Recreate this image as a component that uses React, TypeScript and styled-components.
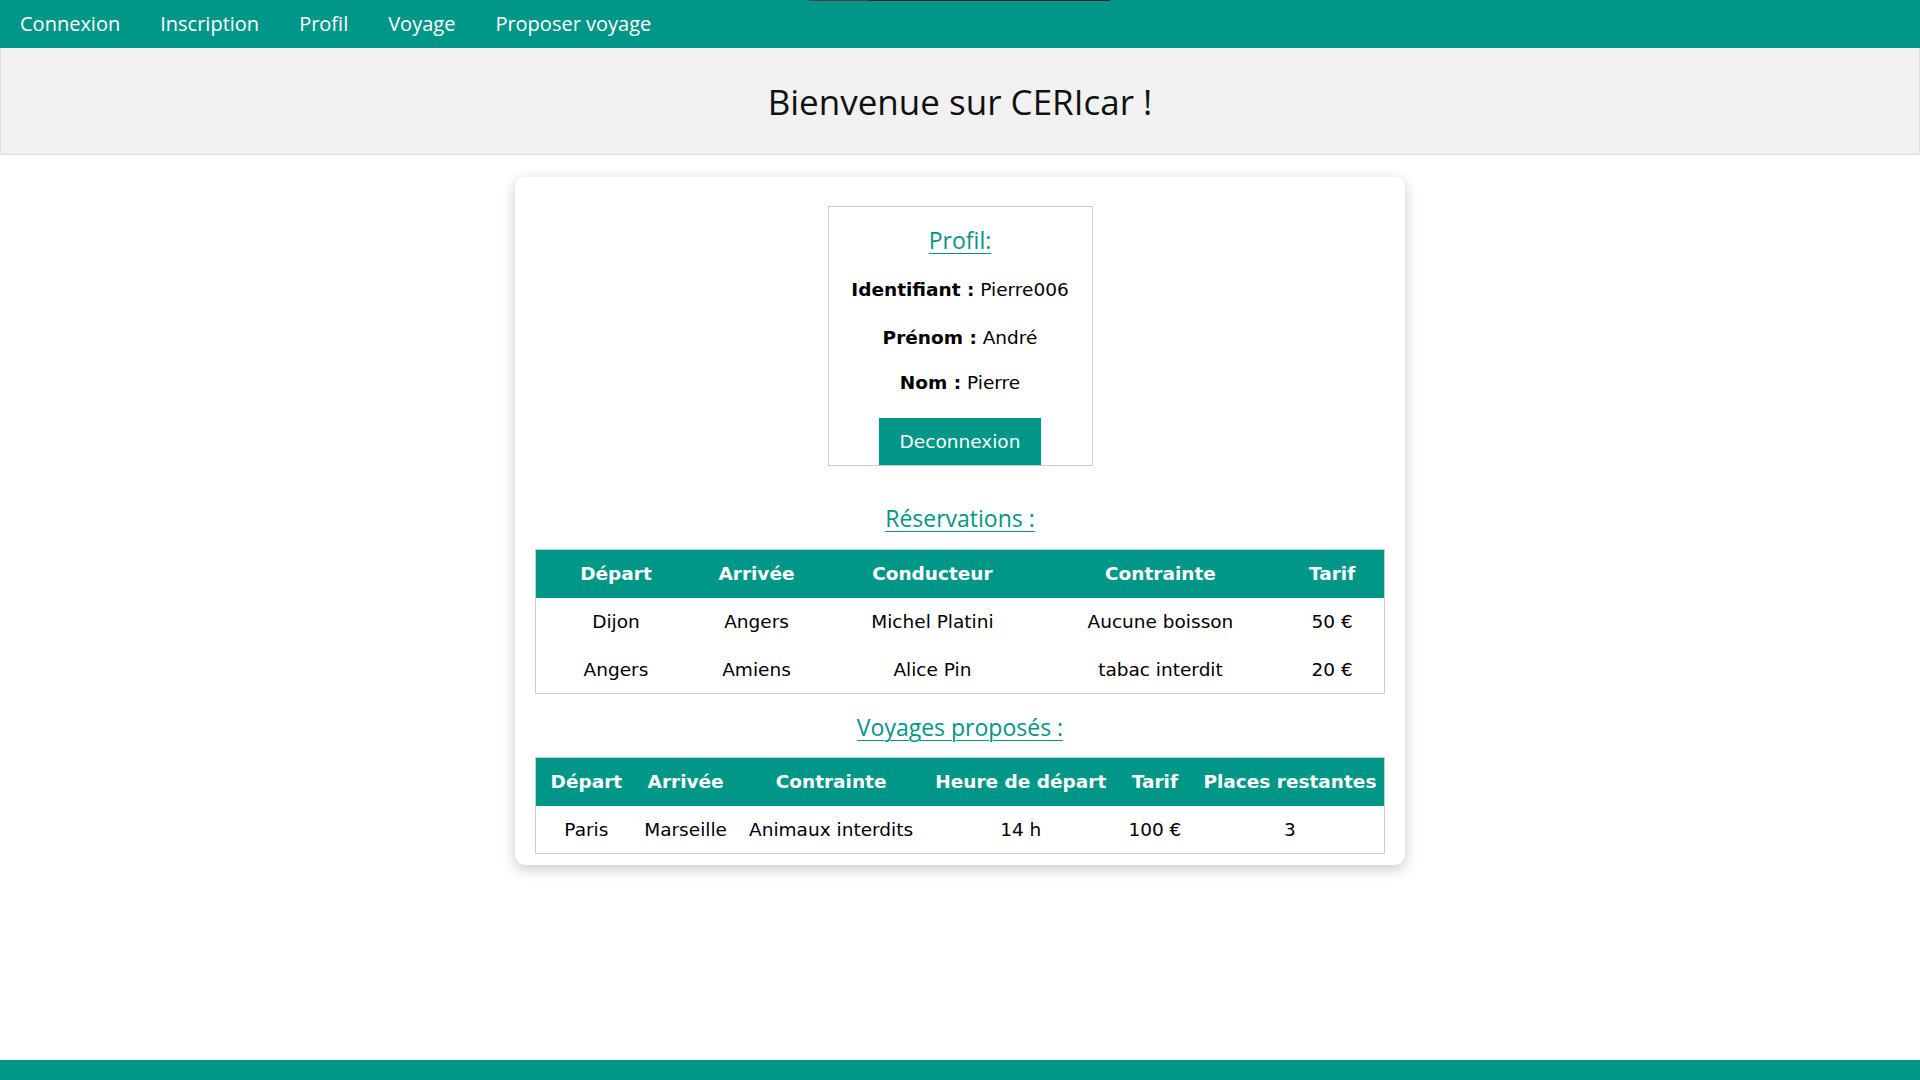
import React from 'react';
import styled, { createGlobalStyle } from 'styled-components';

const TEAL = '#009688';

const GlobalStyle = createGlobalStyle`
  html, body {
    margin: 0;
    padding: 0;
    background: #fff;
  }
  body {
    font-family: "DejaVu Sans", Verdana, sans-serif;
    color: #000;
  }
  * {
    box-sizing: border-box;
  }
`;

const Page = styled.div`
  min-height: 100vh;
  display: flex;
  flex-direction: column;
`;

const NavBar = styled.nav`
  position: relative;
  height: 48px;
  background: ${TEAL};
  display: flex;
  align-items: center;
`;

// petite barre sombre en haut (chargement ?)
const TopStrip = styled.div`
  position: absolute;
  top: 0;
  left: 809px;
  width: 301px;
  height: 1px;
  background: linear-gradient(to right, #444 0 60px, #222 60px);
`;

const NavLink = styled.a`
  padding: 0 20px;
  color: #fff;
  font-family: "Open Sans", "Noto Sans", sans-serif;
  font-size: 20px;
  text-decoration: none;
  line-height: 48px;
  cursor: pointer;
`;

const Banner = styled.header`
  height: 107px;
  background: #f1f1f1;
  border: 1px solid #ddd;
  border-top: none;
  display: flex;
  align-items: center;
  justify-content: center;
`;

const Title = styled.h1`
  margin: 0;
  font-family: "Open Sans", "Noto Sans", sans-serif;
  font-weight: 400;
  font-size: 35px;
  color: #111;
`;

const Card = styled.main`
  width: 890px;
  margin: 22px auto 0;
  padding: 29px 20px 11px;
  background: #fff;
  border-radius: 10px;
  box-shadow: 0 4px 14px rgba(0, 0, 0, 0.22);
  display: flex;
  flex-direction: column;
  align-items: center;
`;

const ProfileBox = styled.section`
  width: 265px;
  border: 1px solid #ccc;
  padding: 17px 0 0;
  display: flex;
  flex-direction: column;
  align-items: center;
`;

const SectionTitle = styled.h2<{ $top?: number; $bottom?: number }>`
  margin: ${(p) => p.$top ?? 0}px 0 ${(p) => p.$bottom ?? 0}px;
  font-family: "Open Sans", "Noto Sans", sans-serif;
  font-weight: 400;
  font-size: 23px;
  line-height: 32px;
  color: ${TEAL};
  text-decoration: underline;
  text-underline-offset: 4px;
  text-decoration-thickness: 1px;
`;

const InfoLine = styled.p<{ $top: number }>`
  margin: ${(p) => p.$top}px 0 0;
  font-size: 18.5px;
  line-height: 22px;
`;

const Button = styled.button`
  margin-top: 24px;
  width: 162px;
  height: 47px;
  border: none;
  background: ${TEAL};
  color: #fff;
  font-family: "DejaVu Sans", Verdana, sans-serif;
  font-size: 18.5px;
  cursor: pointer;
`;

const Table = styled.table`
  width: 100%;
  border-collapse: collapse;
  border: 1px solid #ccc;
  font-size: 18.5px;
`;

const Th = styled.th<{ $w?: number }>`
  width: ${(p) => (p.$w ? `${p.$w}px` : 'auto')};
  background: ${TEAL};
  color: #fff;
  font-weight: 700;
  height: 48px;
  padding: 0 7.5px 0 14.5px;
  text-align: center;
  white-space: nowrap;
`;

const Td = styled.td`
  height: 48px;
  padding: 0 7.5px 0 14.5px;
  text-align: center;
  white-space: nowrap;
`;

const Footer = styled.footer`
  margin-top: auto;
  height: 20px;
  background: ${TEAL};
`;

const reservations = [
  { depart: 'Dijon', arrivee: 'Angers', conducteur: 'Michel Platini', contrainte: 'Aucune boisson', tarif: '50 €' },
  { depart: 'Angers', arrivee: 'Amiens', conducteur: 'Alice Pin', contrainte: 'tabac interdit', tarif: '20 €' },
];

const voyages = [
  { depart: 'Paris', arrivee: 'Marseille', contrainte: 'Animaux interdits', heure: '14 h', tarif: '100 €', places: '3' },
];

const App: React.FC = () => {
  return (
    <Page>
      <GlobalStyle />
      <NavBar>
        <TopStrip />
        <NavLink>Connexion</NavLink>
        <NavLink>Inscription</NavLink>
        <NavLink>Profil</NavLink>
        <NavLink>Voyage</NavLink>
        <NavLink>Proposer voyage</NavLink>
      </NavBar>
      <Banner>
        <Title>Bienvenue sur CERIcar !</Title>
      </Banner>

      <Card>
        <ProfileBox>
          <SectionTitle>Profil:</SectionTitle>
          <InfoLine $top={23}>
            <b>Identifiant :</b> Pierre006
          </InfoLine>
          <InfoLine $top={26}>
            <b>Prénom :</b> André
          </InfoLine>
          <InfoLine $top={23}>
            <b>Nom :</b> Pierre
          </InfoLine>
          <Button>Deconnexion</Button>
        </ProfileBox>

        <SectionTitle $top={36} $bottom={15}>Réservations :</SectionTitle>
        <Table>
          <thead>
            <tr>
              <Th $w={153}>Départ</Th>
              <Th $w={128}>Arrivée</Th>
              <Th $w={223}>Conducteur</Th>
              <Th $w={232}>Contrainte</Th>
              <Th $w={111}>Tarif</Th>
            </tr>
          </thead>
          <tbody>
            {reservations.map((r, i) => (
              <tr key={i}>
                <Td>{r.depart}</Td>
                <Td>{r.arrivee}</Td>
                <Td>{r.conducteur}</Td>
                <Td>{r.contrainte}</Td>
                <Td>{r.tarif}</Td>
              </tr>
            ))}
          </tbody>
        </Table>

        <SectionTitle $top={17} $bottom={14}>Voyages proposés :</SectionTitle>
        <Table>
          <thead>
            <tr>
              <Th>Départ</Th>
              <Th>Arrivée</Th>
              <Th>Contrainte</Th>
              <Th>Heure de départ</Th>
              <Th>Tarif</Th>
              <Th>Places restantes</Th>
            </tr>
          </thead>
          <tbody>
            {voyages.map((v, i) => (
              <tr key={i}>
                <Td>{v.depart}</Td>
                <Td>{v.arrivee}</Td>
                <Td>{v.contrainte}</Td>
                <Td>{v.heure}</Td>
                <Td>{v.tarif}</Td>
                <Td>{v.places}</Td>
              </tr>
            ))}
          </tbody>
        </Table>
      </Card>

      <Footer />
    </Page>
  );
};

export default App;
